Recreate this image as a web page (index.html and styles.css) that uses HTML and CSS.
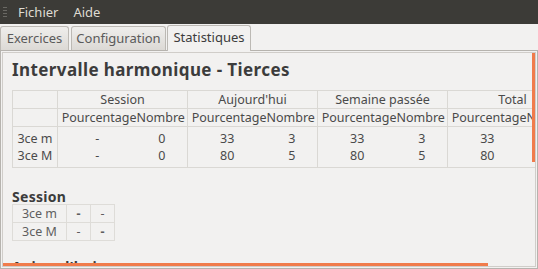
FILE: index.html
```html
<!DOCTYPE html>
<html lang="fr">
<head>
<meta charset="utf-8">
<title>Statistiques</title>
<link rel="stylesheet" href="styles.css">
</head>
<body>
<div class="menubar">
  <span class="grip"></span>
  <span class="menu-item">Fichier</span>
  <span class="menu-item">Aide</span>
</div>
<div class="tabs">
  <div class="tab tab-ex">Exercices</div>
  <div class="tab tab-conf">Configuration</div>
  <div class="tab tab-active">Statistiques</div>
</div>
<div class="notebook">
  <div class="scroller">
    <div class="content">
      <h1 class="title">Intervalle harmonique - Tierces</h1>
      <table class="stats">
        <colgroup class="grp"><col class="c-label"></colgroup>
        <colgroup class="grp"><col class="c-p"><col class="c-n"></colgroup>
        <colgroup class="grp"><col class="c-p"><col class="c-n"></colgroup>
        <colgroup class="grp"><col class="c-p"><col class="c-n"></colgroup>
        <colgroup class="grp"><col class="c-p"><col class="c-n"></colgroup>
        <thead>
          <tr class="hrow1">
            <td></td>
            <td colspan="2">Session</td>
            <td colspan="2">Aujourd'hui</td>
            <td colspan="2">Semaine passée</td>
            <td colspan="2">Total</td>
          </tr>
          <tr class="hrow2">
            <td></td>
            <td class="hp">Pourcentage</td><td class="hn">Nombre</td>
            <td class="hp">Pourcentage</td><td class="hn">Nombre</td>
            <td class="hp">Pourcentage</td><td class="hn">Nombre</td>
            <td class="hp">Pourcentage</td><td class="hn">Nombre</td>
          </tr>
        </thead>
        <tbody>
          <tr class="first">
            <td>3ce m</td><td>-</td><td>0</td><td>33</td><td>3</td><td>33</td><td>3</td><td>33</td><td>3</td>
          </tr>
          <tr class="last">
            <td>3ce M</td><td>-</td><td>0</td><td>80</td><td>5</td><td>80</td><td>5</td><td>80</td><td>5</td>
          </tr>
        </tbody>
      </table>
      <h2 class="section">Session</h2>
      <table class="mini">
        <tr><td class="m-label">3ce m</td><td class="m-val bold">-</td><td class="m-val">-</td></tr>
        <tr><td class="m-label">3ce M</td><td class="m-val">-</td><td class="m-val bold">-</td></tr>
      </table>
      <h2 class="section section-next">Aujourd'hui</h2>
    </div>
    <div class="vbar"></div>
    <div class="hbar"></div>
  </div>
</div>
</body>
</html>
```
FILE: styles.css
```css
html, body {
  margin: 0;
  padding: 0;
}
body {
  width: 538px;
  height: 269px;
  overflow: hidden;
  background: #f2f1f0;
  font-family: "Noto Sans", "DejaVu Sans", sans-serif;
  color: #4a4a4a;
}
.menubar {
  height: 24px;
  background: #3c3b37;
  display: flex;
  align-items: center;
}
.grip {
  width: 4px;
  height: 11px;
  margin: 0 11px 0 3px;
  background: repeating-linear-gradient(to bottom, #6a6964 0 1px, transparent 1px 3px);
}
.menu-item {
  font-size: 13px;
  line-height: 24px;
  color: #dfdbd2;
  margin-right: 15px;
}
.tabs {
  height: 26px;
  display: flex;
  align-items: flex-end;
}
.tab {
  box-sizing: border-box;
  font-size: 13px;
  text-align: center;
  border: 1px solid #bcb9b4;
  border-bottom: none;
  border-radius: 3px 3px 0 0;
}
.tab-ex, .tab-conf {
  height: 24px;
  line-height: 23px;
  color: #5a5a5a;
  background: linear-gradient(to bottom, #efeeec, #dcd9d5);
}
.tab-ex {
  width: 69px;
  margin-right: 2px;
}
.tab-conf {
  width: 95px;
  margin-right: 1px;
}
.tab-active {
  width: 84px;
  height: 26px;
  line-height: 22px;
  padding-bottom: 3px;
  background: #f2f1f0;
  color: #3c3c3c;
  position: relative;
  margin-bottom: -1px;
  z-index: 1;
}
.notebook {
  box-sizing: border-box;
  height: 219px;
  border: 1px solid #b6b3ae;
  padding: 1px;
}
.scroller {
  box-sizing: border-box;
  height: 100%;
  border: 1px solid #d0cdc9;
  position: relative;
  overflow: hidden;
}
.content {
  padding: 6px 0 0 9px;
}
.title {
  margin: 0;
  font-size: 17px;
  line-height: 22px;
  font-weight: bold;
  letter-spacing: 0.4px;
  color: #3c3c3c;
  white-space: nowrap;
}
.stats {
  margin-top: 9px;
  width: 565px;
  border-collapse: collapse;
  table-layout: fixed;
  font-size: 12.5px;
  color: #4a4a4a;
  border: 1px solid #dad8d4;
}
.stats .grp {
  border-left: 1px solid #dad8d4;
  border-right: 1px solid #dad8d4;
}
.c-label { width: 45px; }
.c-p { width: 79px; }
.c-n { width: 51px; }
.stats td {
  padding: 0;
  text-align: center;
  white-space: nowrap;
  overflow: hidden;
  line-height: 17px;
}
.stats .hrow1 td {
  border-bottom: 1px solid #dad8d4;
  height: 16px;
}
.stats .hrow2 td {
  border-bottom: 1px solid #dad8d4;
  height: 17px;
  line-height: 17px;
}
.stats .hp {
  text-align: right;
}
.stats .hn {
  text-align: left;
}
.stats tbody .first td {
  padding-top: 3px;
}
.stats tbody .last td {
  padding-bottom: 3px;
}
.section {
  margin: 20px 0 0;
  font-size: 14px;
  line-height: 17px;
  font-weight: bold;
  letter-spacing: 0.3px;
  color: #3c3c3c;
}
.section-next {
  margin-top: 17px;
}
.mini {
  margin-top: -1px;
  border-collapse: collapse;
  font-size: 12.5px;
  color: #5e5e5e;
  border: 1px solid #d6d4d0;
}
.mini td {
  border: 1px solid #dedcd8;
  height: 17px;
  line-height: 17px;
  padding: 0;
  text-align: center;
}
.m-label { width: 53px; }
.m-val { width: 23px; }
.bold { font-weight: bold; }
.vbar {
  position: absolute;
  right: 0;
  top: 0;
  width: 3px;
  height: 109px;
  background: #f07b4b;
}
.hbar {
  position: absolute;
  left: 0;
  bottom: 0;
  width: 485px;
  height: 3px;
  background: #f07b4b;
}
```
